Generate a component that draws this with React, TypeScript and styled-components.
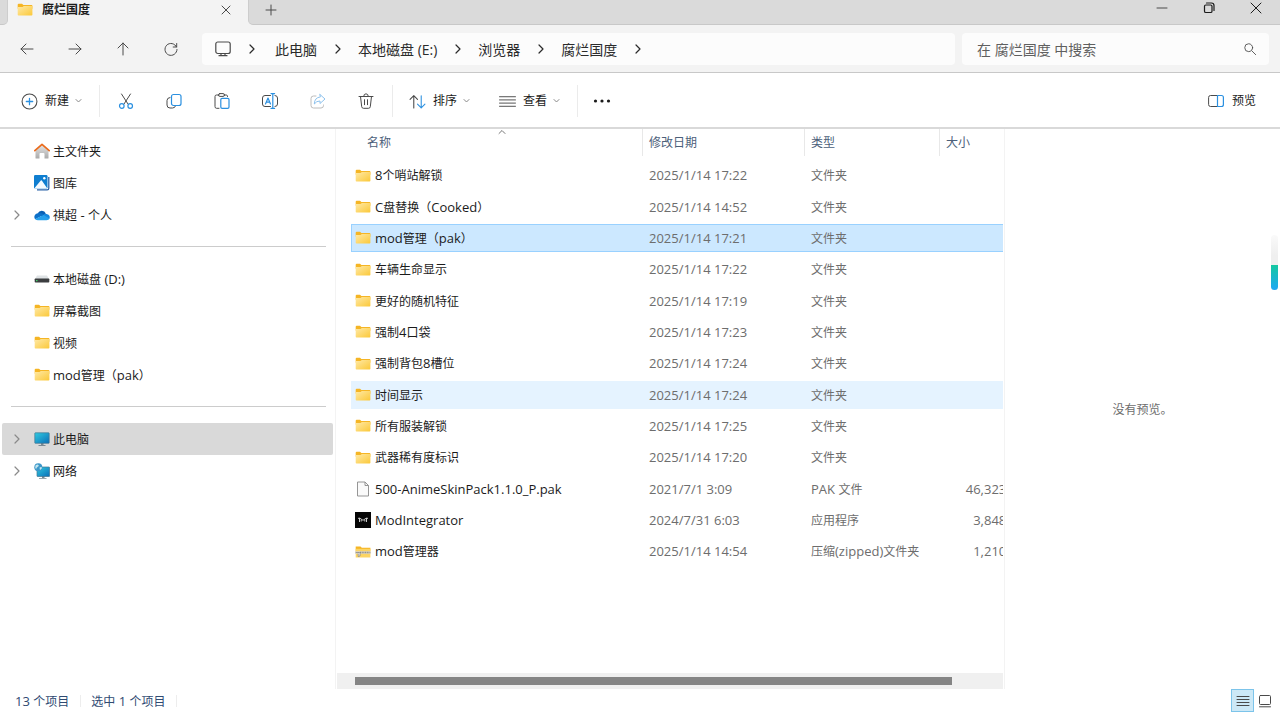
import React from 'react';
import styled, { createGlobalStyle, css } from 'styled-components';

const GlobalStyle = createGlobalStyle`
  *, *::before, *::after { box-sizing: border-box; }
  body {
    margin: 0;
    background: #ffffff;
    color: #1b1b1b;
    font-family: 'Open Sans', 'Noto Sans', 'Noto Sans CJK SC', sans-serif;
    font-size: 12px;
    line-height: 20px;
  }
  button, input { font: inherit; color: inherit; }
  svg { display: block; flex: none; }
`;

const Window = styled.div`
  display: flex;
  flex-direction: column;
  min-height: 100vh;
`;

/* ---------- text ---------- */

const Latin = styled.span`
  font-size: 13px;
  line-height: 0;
`;

/* Latin runs are set one size larger than the Han characters beside them. */
function Label({ text }: { text: string }) {
  const parts = text.split(/([\u0020-\u007e]+)/).filter(Boolean);
  return (
    <>
      {parts.map((part, i) => (/^[\u0020-\u007e]+$/.test(part) ? <Latin key={i}>{part}</Latin> : part))}
    </>
  );
}

/* ---------- tab strip ---------- */

const TabStrip = styled.header`
  display: flex;
  height: 25px;
  background: #f3f3f3;
`;

const PreviousTab = styled.div`
  width: 8px;
  background: #dadada;
  border-bottom: 1px solid #c8c8c8;
  border-right: 1px solid #cdcdcd;
  border-bottom-right-radius: 5px;
`;

const ActiveTab = styled.div`
  display: flex;
  align-items: center;
  width: 240px;
  height: 20px;
  padding: 0 14px 0 9px;
  font-weight: 700;
`;

const TabTitle = styled.span`
  flex: 1;
  margin-left: 9px;
`;

const StripRest = styled.div`
  display: flex;
  flex: 1;
  justify-content: space-between;
  padding: 0 10px 5px 12px;
  background: #dadada;
  border-bottom: 1px solid #c8c8c8;
  border-left: 1px solid #cdcdcd;
  border-bottom-left-radius: 5px;
`;

const IconButton = styled.button<{ $w?: number; $h?: number }>`
  display: flex;
  align-items: center;
  justify-content: center;
  width: ${p => p.$w ?? 32}px;
  height: ${p => p.$h ?? 32}px;
  padding: 0;
  border: 0;
  background: transparent;
`;

const WindowControls = styled.div`
  display: flex;
  gap: 19px;
`;

/* ---------- address bar ---------- */

const AddressBar = styled.div`
  display: flex;
  align-items: center;
  height: 48px;
  padding: 0 11px 0 11px;
  background: #f3f3f3;
  border-bottom: 1px solid #c8c8c8;
`;

const History = styled.div`
  display: flex;
  gap: 16px;
  margin-right: 15px;
`;

const Breadcrumb = styled.nav`
  display: flex;
  flex: 1;
  align-items: center;
  height: 32px;
  padding-left: 13px;
  background: #fcfcfc;
  border-radius: 4px;
  font-size: 14px;
  white-space: nowrap;
`;

const Crumb = styled.a`
  padding-top: 2px;
  color: #2b2b2b;
  text-decoration: none;
  &:first-of-type { margin-left: 3px; }
`;

const CrumbArrow = styled.span`
  display: flex;
  justify-content: center;
  width: 41px;
`;

const SearchBox = styled.label`
  display: flex;
  align-items: center;
  width: 307px;
  height: 32px;
  margin-left: 7px;
  padding: 0 12px 0 15px;
  background: #fcfcfc;
  border-radius: 4px;
`;

const SearchInput = styled.input`
  flex: 1;
  min-width: 0;
  padding: 2px 0 0;
  border: 0;
  outline: 0;
  background: transparent;
  font-size: 14px;
  &::placeholder { color: #5f5f5f; opacity: 1; }
`;

/* ---------- command bar ---------- */

const CommandBar = styled.div`
  display: flex;
  align-items: center;
  height: 56px;
  padding: 2px 24px 0 21px;
  border-bottom: 2px solid #d9d9d9;
`;

const CommandButton = styled.button`
  display: flex;
  align-items: center;
  height: 32px;
  padding: 0;
  border: 0;
  background: transparent;
  white-space: nowrap;
`;

const CommandText = styled.span`
  margin: 0 6px 0 7px;
`;

const Divider = styled.span`
  width: 1px;
  height: 32px;
  background: #ebebeb;
`;

const NewButton = styled(CommandButton)`
  margin-right: 17px;
`;

const IconCommands = styled.div`
  display: flex;
  gap: 16px;
  margin: 0 10px;
`;

const DropCommands = styled.div`
  display: flex;
  gap: 29px;
  margin: 0 17px 0 16px;
`;

const PreviewToggle = styled(CommandButton)`
  gap: 8px;
  margin-left: auto;
`;

/* ---------- body ---------- */

const Main = styled.main`
  display: flex;
  flex: 1;
`;

const Sidebar = styled.nav`
  width: 336px;
  padding: 6px 2px 0;
  border-right: 1px solid #f3f3f3;
`;

const NavItem = styled.a<{ $current?: boolean }>`
  display: flex;
  align-items: center;
  height: 32px;
  padding-left: 10px;
  border-radius: 2px;
  color: #1b1b1b;
  text-decoration: none;
  ${p => p.$current && css`background: #d9d9d9;`}
`;

const NavArrow = styled.span`
  width: 22px;
`;

const NavText = styled.span`
  margin-left: 3px;
  padding-top: 2px;
`;

const NavRule = styled.hr`
  height: 1px;
  margin: 15px 7px 16px 9px;
  border: 0;
  background: #cccccc;
`;

const ListPane = styled.section`
  display: flex;
  flex: 1;
  flex-direction: column;
  justify-content: space-between;
  min-width: 0;
  overflow: hidden;
  padding-right: 1px;
  border-right: 1px solid #f3f3f3;
`;

const Viewport = styled.div`
  overflow: hidden;
  padding-left: 15px;
`;

const FileTable = styled.table`
  display: block;
  width: 681px;
  border-spacing: 0;
`;

const HeadRow = styled.tr`
  display: grid;
  grid-template-columns: 292px 162px 135px 92px;
  height: 27px;
  margin-bottom: 5px;
`;

const HeadCell = styled.th<{ $first?: boolean }>`
  position: relative;
  padding: 4px 0 0 ${p => (p.$first ? 16 : 6)}px;
  border-right: 1px solid #e8e8e8;
  color: #4c607a;
  font-weight: 400;
  text-align: left;
`;

const SortMark = styled.span`
  position: absolute;
  top: 0;
  left: 50%;
`;

const Rows = styled.tbody`
  display: flex;
  flex-direction: column;
  gap: 3px;
`;

const Row = styled.tr<{ $state?: 'selected' | 'hover' }>`
  display: grid;
  grid-template-columns: 292px 162px 135px 92px;
  align-items: center;
  height: 28px;
  &:nth-child(3n + 1) { height: 29px; }
  ${p => p.$state === 'selected' && css`
    background: #cce8ff;
    box-shadow: inset 0 0 0 1px #99d1ff;
  `}
  ${p => p.$state === 'hover' && css`background: #e5f3ff;`}
`;

const NameCell = styled.td`
  display: flex;
  align-items: center;
  padding: 0 0 0 4px;
`;

const FileName = styled.span`
  margin-left: 4px;
  padding-top: 1px;
`;

const Cell = styled.td<{ $right?: boolean }>`
  padding: 1px 6px 0;
  color: #6d6d6d;
  white-space: nowrap;
  text-align: ${p => (p.$right ? 'right' : 'left')};
`;

const ScrollTrack = styled.div`
  height: 16px;
  margin-left: 1px;
  padding: 4px 51px 4px 18px;
  background: #f0f0f0;
`;

const ScrollThumb = styled.div`
  height: 8px;
  background: #858585;
`;

const PreviewPane = styled.aside`
  display: flex;
  align-items: center;
  justify-content: center;
  width: 275px;
  padding-top: 2px;
  color: #6d6d6d;
`;

const EdgeMeter = styled.div`
  position: absolute;
  top: 235px;
  right: 2px;
  width: 7px;
  height: 55px;
  padding-top: 30px;
  border-radius: 4px;
  background: linear-gradient(#fafafa, #efefef 20px);
`;

const EdgeLevel = styled.div`
  height: 25px;
  border-radius: 0 0 4px 4px;
  background: linear-gradient(#14c8a0, #1ea7f5);
`;

const StatusBar = styled.footer`
  display: flex;
  align-items: center;
  height: 23px;
  padding: 0 4px 0 15px;
  color: #2f4a72;
`;

const StatusText = styled.span`
  margin-right: 11px;
  padding-top: 2px;
`;

const StatusDivider = styled.span`
  width: 1px;
  height: 12px;
  margin-right: 10px;
  background: #ededed;
`;

const ViewSwitch = styled.div`
  display: flex;
  margin-left: auto;
`;

const ViewButton = styled(IconButton)<{ $on?: boolean }>`
  ${p => p.$on && css`
    background: #cce8f6;
    border: 1px solid #7cc4ea;
  `}
`;

/* ---------- icons ---------- */

const stroke = { fill: 'none', stroke: '#4a4a4a', strokeWidth: 1, strokeLinecap: 'round', strokeLinejoin: 'round' } as const;
const blue = '#2b90e0';

const Svg = ({ size = 16, children }: { size?: number; children: React.ReactNode }) => (
  <svg width={size} height={size} viewBox="0 0 16 16" aria-hidden="true" {...stroke}>{children}</svg>
);

const ChevronRight = ({ color = '#2b2b2b' }: { color?: string }) => (
  <svg width="10" height="10" viewBox="0 0 10 10" {...stroke} stroke={color} strokeWidth="1.2"><path d="M3 1l4 4-4 4" /></svg>
);
const ChevronDown = () => (
  <svg width="7" height="6" viewBox="0 0 7 6" {...stroke} stroke="#888"><path d="M1 1.5L3.5 4 6 1.5" /></svg>
);
const FolderIcon = () => (
  <svg width="16" height="16" viewBox="0 0 16 16" aria-hidden="true">
    <defs>
      <linearGradient id="folder" x1="0" y1="0" x2="1" y2="1">
        <stop offset="0" stopColor="#ffe9a6" /><stop offset="1" stopColor="#fbc838" />
      </linearGradient>
    </defs>
    <path d="M.7 2.800q0-1 1-1h3.300l1.400 1.200h8.200q.8 0 .8.800v3H.7z" fill="#f5b524" />
    <path d="M.7 4.900h4.900l1.200-.9h8.600v8.800q0 .8-.8.800H1.500q-.8 0-.8-.8z" fill="url(#folder)" />
  </svg>
);
const FileIcon = () => (
  <svg width="16" height="16" viewBox="0 0 16 16"><path d="M2.500 1h7.500l3.500 3.500v10.500h-11z" fill="#fafafa" stroke="#8a8a8a" strokeWidth=".9" /><path d="M10 1v3.500h3.500" fill="none" stroke="#8a8a8a" strokeWidth=".9" /></svg>
);
const AppIcon = () => (
  <svg width="16" height="16" viewBox="0 0 16 16"><path d="M0 0h16v16H0z" fill="#050505" /><path d="M4.500 10V6L8 8.300 11.500 6v4M3 6.300h1.500M11.500 6.300H13M6.200 9.500V8M9.800 9.500V8" fill="none" stroke="#c9c9c9" strokeWidth="1" /></svg>
);
const ZipIcon = () => (
  <svg width="16" height="16" viewBox="0 0 16 16">
    <path d="M.7 2.500h4.800l1.300 1.200h8.600V7H.7z" fill="#f5b524" />
    <path d="M.7 4.800h14.700v8.700H.7z" fill="#fcd462" />
    <path d="M0 7.200h15.500v2.600H0z" fill="#d8d3c4" />
    <path d="M5 8.500h10.500" stroke="#8a8a8a" strokeWidth="1.400" strokeDasharray="1 .7" />
    <path d="M.8 8.500h3.700M3.600 8l1.400 1.500v2.500l-1.800.6V9.500" fill="#eee" stroke="#8a8a8a" strokeWidth=".8" />
  </svg>
);
const HomeIcon = () => (
  <svg width="16" height="16" viewBox="0 0 16 16">
    <defs><linearGradient id="home" x1="0" y1="0" x2="0" y2="1"><stop offset="0" stopColor="#e6e6e6" /><stop offset="1" stopColor="#a9a9a9" /></linearGradient></defs>
    <path d="M1.500 7L8 1.500 14.500 7v8q0 .6-.6.600H10.500v-4.600q0-1-1-1h-3q-1 0-1 1v4.600H2.100q-.6 0-.6-.6z" fill="url(#home)" />
    <path d="M.8 7.600L8 1.300l7.200 6.300" fill="none" stroke="#ea6b1c" strokeWidth="1.700" strokeLinecap="round" strokeLinejoin="round" />
  </svg>
);
const GalleryIcon = () => (
  <svg width="16" height="16" viewBox="0 0 16 16">
    <path d="M3 14.800h10.200q1.600 0 1.600-1.600V2" fill="none" stroke="#2b62a8" strokeWidth="1.300" />
    <rect x="0" y="0" width="13.500" height="13.500" rx="1.200" fill="#0f7ed0" />
    <path d="M.6 12.900L6.800 5.600q.5-.6 1 0l5.200 7.300q-.4.600-1 .6H1.500q-.6 0-.9-.6z" fill="#f4faff" />
    <circle cx="10.300" cy="3.300" r="1.200" fill="#fff" />
  </svg>
);
const CloudIcon = () => (
  <svg width="16" height="16" viewBox="0 0 16 16">
    <path d="M3.800 6.300A4.300 4.300 0 0 1 11.800 6.500L8 10z" fill="#0a5fb4" />
    <path d="M3.600 6.200A3.700 3.700 0 0 0 1.200 12.200L10.500 7.500Q7 5.200 3.600 6.200z" fill="#0d70c8" />
    <path d="M9 8.300Q11 5.800 13.300 7.200A3.200 3.200 0 0 1 15.500 11.500L12 11z" fill="#1686dd" />
    <path d="M1 12Q2.200 13.300 4 13.300h8.500q2.300 0 3.200-1.800L9.500 7.900z" fill="#27a0ec" />
  </svg>
);
const DriveIcon = () => (
  <svg width="16" height="16" viewBox="0 0 16 16">
    <path d="M3 4.500h10l2.300 4H.7z" fill="#dfe3e5" /><rect x=".7" y="7.500" width="14.600" height="4" rx=".8" fill="#3b3d3f" /><rect x="2" y="9" width="1.500" height="1.200" fill="#43d06b" />
  </svg>
);
const PcIcon = () => (
  <svg width="16" height="16" viewBox="0 0 16 16">
    <defs><linearGradient id="pc" x1="0" y1="0" x2="1" y2="1"><stop offset="0" stopColor="#31cbe0" /><stop offset="1" stopColor="#0b6fb8" /></linearGradient></defs>
    <path d="M7 12h2.500v2.200H7zM4.500 14h7v.900h-7z" fill="#7b8a93" />
    <rect x=".8" y="1.800" width="14.400" height="10.500" rx=".6" fill="url(#pc)" stroke="#46768f" strokeWidth=".7" />
  </svg>
);
const NetworkIcon = () => (
  <svg width="16" height="16" viewBox="0 0 16 16">
    <path d="M8 12.500h2.500v2.500H8zM5 15h7.500v.800H5z" fill="#7b8a93" />
    <rect x="3" y="4" width="12.600" height="9.500" rx=".6" fill="url(#pc)" stroke="#46768f" strokeWidth=".7" />
    <circle cx="4.300" cy="4.300" r="4" fill="#3d97c9" /><path d="M1.500 2.500q2-1.500 3-.5t-1 2-1 2.500Q.5 5 1.500 2.500zM5.500 4.500q2-1 2.400 0T6 7z" fill="#c3e6ef" />
  </svg>
);

const fileIcons = { folder: FolderIcon, file: FileIcon, app: AppIcon, zip: ZipIcon };

/* ---------- data ---------- */

type Entry = { name: string; date: string; type: string; size?: string; icon?: keyof typeof fileIcons; state?: 'selected' | 'hover' };

const entries: Entry[] = [
  { name: '8个哨站解锁', date: '2025/1/14 17:22', type: '文件夹' },
  { name: 'C盘替换（Cooked）', date: '2025/1/14 14:52', type: '文件夹' },
  { name: 'mod管理（pak）', date: '2025/1/14 17:21', type: '文件夹', state: 'selected' },
  { name: '车辆生命显示', date: '2025/1/14 17:22', type: '文件夹' },
  { name: '更好的随机特征', date: '2025/1/14 17:19', type: '文件夹' },
  { name: '强制4口袋', date: '2025/1/14 17:23', type: '文件夹' },
  { name: '强制背包8槽位', date: '2025/1/14 17:24', type: '文件夹' },
  { name: '时间显示', date: '2025/1/14 17:24', type: '文件夹', state: 'hover' },
  { name: '所有服装解锁', date: '2025/1/14 17:25', type: '文件夹' },
  { name: '武器稀有度标识', date: '2025/1/14 17:20', type: '文件夹' },
  { name: '500-AnimeSkinPack1.1.0_P.pak', date: '2021/7/1 3:09', type: 'PAK 文件', size: '46,323 KB', icon: 'file' },
  { name: 'ModIntegrator', date: '2024/7/31 6:03', type: '应用程序', size: '3,848 KB', icon: 'app' },
  { name: 'mod管理器', date: '2025/1/14 14:54', type: '压缩(zipped)文件夹', size: '1,210 KB', icon: 'zip' },
];

type Place = { name: string; icon: React.ComponentType; arrow?: boolean; current?: boolean };

const places: Place[][] = [
  [
    { name: '主文件夹', icon: HomeIcon },
    { name: '图库', icon: GalleryIcon },
    { name: '祺超 - 个人', icon: CloudIcon, arrow: true },
  ],
  [
    { name: '本地磁盘 (D:)', icon: DriveIcon },
    { name: '屏幕截图', icon: FolderIcon },
    { name: '视频', icon: FolderIcon },
    { name: 'mod管理（pak）', icon: FolderIcon },
  ],
  [
    { name: '此电脑', icon: PcIcon, arrow: true, current: true },
    { name: '网络', icon: NetworkIcon, arrow: true },
  ],
];

const crumbs = ['此电脑', '本地磁盘 (E:)', '浏览器', '腐烂国度'];

export default function App() {
  return (
    <Window>
      <GlobalStyle />
      <TabStrip>
        <PreviousTab />
        <ActiveTab>
          <FolderIcon />
          <TabTitle>腐烂国度</TabTitle>
          <IconButton $w={16} $h={16} aria-label="关闭标签页">
            <Svg><path d="M4 4l8 8M12 4l-8 8" /></Svg>
          </IconButton>
        </ActiveTab>
        <StripRest>
          <IconButton $w={20} $h={20} aria-label="新标签页"><Svg><path d="M8 3v10M3 8h10" /></Svg></IconButton>
          <WindowControls>
            <IconButton $w={28} $h={15} aria-label="最小化"><Svg><path d="M3 8h10" /></Svg></IconButton>
            <IconButton $w={28} $h={15} aria-label="还原">
              <Svg><g stroke="#1b1b1b" strokeWidth="1.200"><rect x="3.500" y="5" width="7.500" height="7.500" rx="1.300" /><path d="M5.500 3h5q2.500 0 2.500 2.500v5" /></g></Svg>
            </IconButton>
            <IconButton $w={28} $h={15} aria-label="关闭"><Svg><path d="M3 3l10 10M13 3L3 13" stroke="#1b1b1b" /></Svg></IconButton>
          </WindowControls>
        </StripRest>
      </TabStrip>

      <AddressBar>
        <History>
          <IconButton aria-label="后退"><Svg><path d="M14 8H2M7 3L2 8l5 5" /></Svg></IconButton>
          <IconButton aria-label="前进"><Svg><path d="M2 8h12M9 3l5 5-5 5" /></Svg></IconButton>
          <IconButton aria-label="向上"><Svg><path d="M8 14V2M3 7l5-5 5 5" /></Svg></IconButton>
          <IconButton aria-label="刷新"><Svg><path d="M13.500 6A6 6 0 1 0 14 8.500M13.700 2.500V6h-3.500" /></Svg></IconButton>
        </History>
        <Breadcrumb aria-label="地址">
          <Svg><rect x=".8" y="1" width="14.400" height="11.500" rx="2" strokeWidth="1.200" /><path d="M6 12.500v2M10 12.500v2M4 14.700h8" strokeWidth="1.200" /></Svg>
          {crumbs.map(c => (
            <React.Fragment key={c}>
              <CrumbArrow><ChevronRight /></CrumbArrow>
              <Crumb href="#">{c}</Crumb>
            </React.Fragment>
          ))}
          <CrumbArrow><ChevronRight /></CrumbArrow>
        </Breadcrumb>
        <SearchBox>
          <SearchInput type="text" placeholder="在 腐烂国度 中搜索" aria-label="搜索" />
          <Svg size={14}><circle cx="6.500" cy="6.500" r="4.500" /><path d="M10 10l4.500 4.500" /></Svg>
        </SearchBox>
      </AddressBar>

      <CommandBar>
        <NewButton>
          <Svg size={17}><circle cx="8" cy="8" r="7" /><path d="M8 5v6M5 8h6" stroke={blue} strokeWidth="1.200" /></Svg>
          <CommandText>新建</CommandText>
          <ChevronDown />
        </NewButton>
        <Divider />
        <IconCommands>
          <IconButton aria-label="剪切">
            <Svg><path d="M3.500 1l6.500 10M12.500 1L6 11" /><g stroke={blue} strokeWidth="1.200"><circle cx="3.800" cy="13" r="2.300" /><circle cx="12.200" cy="13" r="2.300" /></g></Svg>
          </IconButton>
          <IconButton aria-label="复制">
            <Svg><path d="M4 4.500q-3 .3-3 3v4.500q0 3 3 3h2.500q2.500 0 3-2" /><rect x="5.500" y="1.500" width="9.500" height="11" rx="2" stroke={blue} strokeWidth="1.200" /></Svg>
          </IconButton>
          <IconButton aria-label="粘贴">
            <Svg><path d="M5 2H2.500Q1 2 1 3.500v10Q1 15.300 2.500 15.300H5M10 2h2.300q1.300 0 1.300 1.500" /><rect x="4.500" y=".6" width="6" height="2.800" rx="1.300" /><rect x="6.800" y="5.300" width="8.200" height="10" rx="1.300" stroke={blue} strokeWidth="1.200" /></Svg>
          </IconButton>
          <IconButton aria-label="重命名">
            <Svg><path d="M8.500 2.500H3q-2.500 0-2.500 2.500v6q0 2.500 2.500 2.500h5.500M13 2.500q2.500 0 2.500 2.500v6q0 2.500-2.500 2.500" /><path d="M3.500 11L6 5l2.500 6M4.300 9.200h3.400M10.800.7v14.600M9 .6h3.600M9 15.400h3.600" stroke={blue} strokeWidth="1.200" /></Svg>
          </IconButton>
          <IconButton aria-label="共享">
            <Svg><path d="M6 3H3.500Q1 3 1 5.500v7Q1 15 3.500 15h7.500q2.500 0 2.500-2.500V12" stroke="#bcbcbc" /><path d="M10 1.500L15 6l-5 4.500V8Q6.500 7.800 4.300 11 4.500 4.500 10 4z" stroke="#8fc3ee" /></Svg>
          </IconButton>
          <IconButton aria-label="删除">
            <Svg><path d="M1 3.500h14M5.700 3.300Q5.800.8 8 .8t2.300 2.500M2.500 3.500l1.200 10.200q.2 1.600 1.800 1.600h5q1.600 0 1.800-1.600l1.200-10.200M6.500 6.700v5M9.500 6.700v5" /></Svg>
          </IconButton>
        </IconCommands>
        <Divider />
        <DropCommands>
          <CommandButton>
            <Svg size={17}><path d="M4.500 14V2.500M1 6l3.500-3.500L8 6" /><path d="M11.500 2.500V14M8 10.500l3.500 3.500 3.500-3.500" stroke={blue} /></Svg>
            <CommandText>排序</CommandText>
            <ChevronDown />
          </CommandButton>
          <CommandButton>
            <Svg size={17}><path d="M.5 3.500h15M.5 6.500h15M.5 9.500h15M.5 12.500h15" strokeWidth=".9" /></Svg>
            <CommandText>查看</CommandText>
            <ChevronDown />
          </CommandButton>
        </DropCommands>
        <Divider />
        <IconButton $w={48} aria-label="更多">
          <svg width="18" height="6" viewBox="0 0 18 6" fill="#1b1b1b"><circle cx="2.500" cy="3" r="1.600" /><circle cx="9" cy="3" r="1.600" /><circle cx="15.500" cy="3" r="1.600" /></svg>
        </IconButton>
        <PreviewToggle>
          <Svg><path d="M9 2.500H2.500Q.6 2.500.6 4.500v7q0 2 1.900 2H9" /><path d="M9.500 2.500h4q1.900 0 1.900 2v7q0 2-1.900 2h-4z" stroke={blue} strokeWidth="1.200" /></Svg>
          预览
        </PreviewToggle>
      </CommandBar>

      <Main>
        <Sidebar aria-label="位置">
          {places.map((group, g) => (
            <React.Fragment key={g}>
              {g > 0 && <NavRule />}
              {group.map(({ name, icon: Icon, arrow, current }) => (
                <NavItem key={name} href="#" $current={current}>
                  <NavArrow>{arrow && <ChevronRight color="#8a8a8a" />}</NavArrow>
                  <Icon />
                  <NavText><Label text={name} /></NavText>
                </NavItem>
              ))}
            </React.Fragment>
          ))}
        </Sidebar>

        <ListPane>
          <Viewport>
            <FileTable>
              <thead>
                <HeadRow>
                  <HeadCell $first>
                    名称
                    <SortMark>
                      <svg width="10" height="6" viewBox="0 0 10 6" {...stroke} stroke="#777"><path d="M2 4.500l3-3 3 3" /></svg>
                    </SortMark>
                  </HeadCell>
                  <HeadCell>修改日期</HeadCell>
                  <HeadCell>类型</HeadCell>
                  <HeadCell>大小</HeadCell>
                </HeadRow>
              </thead>
              <Rows>
                {entries.map(e => {
                  const Icon = fileIcons[e.icon ?? 'folder'];
                  return (
                    <Row key={e.name} $state={e.state}>
                      <NameCell><Icon /><FileName><Label text={e.name} /></FileName></NameCell>
                      <Cell><Label text={e.date} /></Cell>
                      <Cell><Label text={e.type} /></Cell>
                      <Cell $right><Label text={e.size ?? ''} /></Cell>
                    </Row>
                  );
                })}
              </Rows>
            </FileTable>
          </Viewport>
          <ScrollTrack><ScrollThumb /></ScrollTrack>
        </ListPane>

        <PreviewPane>没有预览。</PreviewPane>
      </Main>

      <StatusBar>
        <StatusText><Label text="13 个项目" /></StatusText>
        <StatusDivider />
        <StatusText><Label text="选中 1 个项目" /></StatusText>
        <StatusDivider />
        <ViewSwitch>
          <ViewButton $on $w={23} $h={23} aria-label="详细信息">
            <Svg><path d="M2 3.500h12M2 6.500h12M2 9.500h12M2 12.500h12" /></Svg>
          </ViewButton>
          <ViewButton $w={22} $h={23} aria-label="大图标">
            <Svg><rect x="2.500" y="2.500" width="11" height="9" rx="1" /><path d="M2.500 13.800h11" /></Svg>
          </ViewButton>
        </ViewSwitch>
      </StatusBar>
      <EdgeMeter><EdgeLevel /></EdgeMeter>
    </Window>
  );
}
